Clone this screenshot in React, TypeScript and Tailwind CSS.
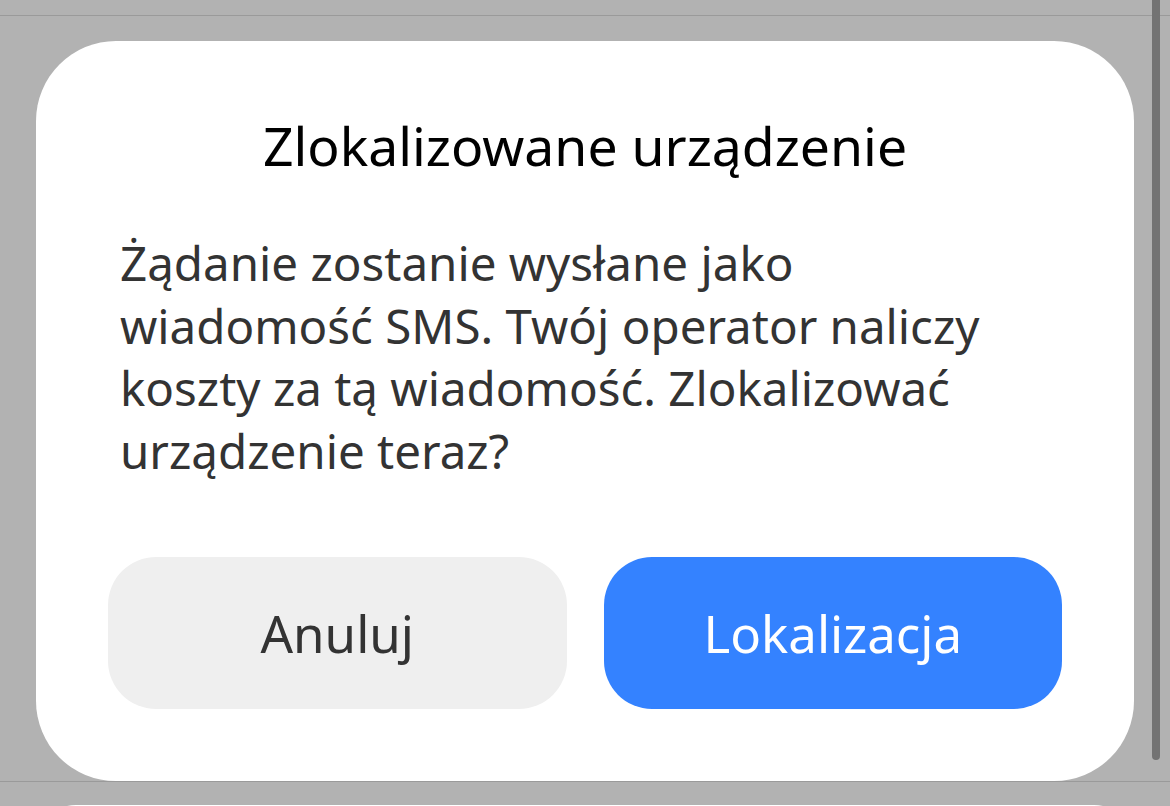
export default function App() {
    return (
        <div
            className="relative h-[806px] w-[1170px] overflow-hidden bg-[#b2b2b2]"
            style={{ fontFamily: '"Noto Sans", "Open Sans", sans-serif' }}
        >
            <div className="h-[16px] border-b border-[#9a9a9a]" />
            <div className="flex h-[765px] items-end pl-[36px] pr-[36px]">
                <div className="flex h-[740px] w-[1098px] flex-col rounded-[80px] bg-white px-[72px] pb-[72px] pt-[75px]">
                    <h1 className="text-center text-[53.5px] leading-[60px] text-black">
                        Zlokalizowane urządzenie
                    </h1>
                    <p className="mt-[56px] pl-[12px] text-[47.5px] leading-[62.5px] text-[#333333]">
                        Żądanie zostanie wysłane jako
                        <br />
                        wiadomość SMS. Twój operator naliczy
                        <br />
                        koszty za tą wiadomość. Zlokalizować
                        <br />
                        urządzenie teraz?
                    </p>
                    <div className="mt-auto flex gap-[37px]">
                        <button className="flex h-[152px] flex-1 items-center justify-center rounded-[48px] bg-[#efefef] text-[51px] text-[#333333]">
                            Anuluj
                        </button>
                        <button className="flex h-[152px] flex-1 items-center justify-center rounded-[48px] bg-[#3482ff] text-[51px] text-white">
                            Lokalizacja
                        </button>
                    </div>
                </div>
            </div>
            <div className="border-t border-[#9a9a9a]" />
            <div className="mx-[36px] mt-[23px] h-[40px] rounded-t-[40px] bg-white" />
            <div className="absolute right-[10px] top-0 h-[760px] w-[8px] rounded-b-full bg-[#737373]" />
        </div>
    );
}
